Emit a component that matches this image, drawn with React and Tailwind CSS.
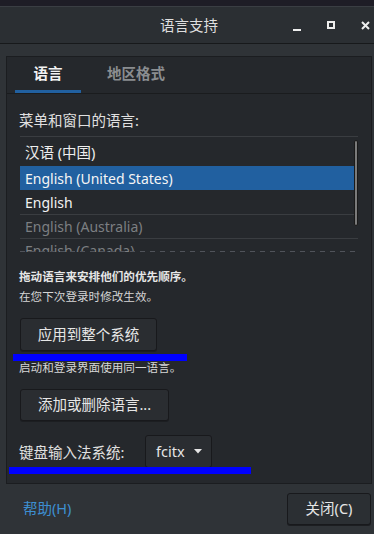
export default function App() {
  const font = "font-['Noto_Sans','Noto_Sans_CJK_SC',sans-serif]";
  return (
    <div className={`relative w-[374px] h-[534px] overflow-hidden bg-[#2f3337] ${font} flex flex-col text-[#e0e0e0]`}>
      <div className="h-[6px] bg-[#1e1d26]" />
      <div className="h-px bg-[#3a3e43]" />
      {/* Title bar */}
      <div className="h-[37px] bg-[#2b2f33] border-b border-[#17191b] grid grid-cols-[1fr_auto_1fr] items-center">
        <div />
        <div className="pl-[4px] text-[14.5px] leading-[20px] text-[#dfdfdf]">语言支持</div>
        <div className="flex justify-end items-center pr-[4px]">
          <svg width="8" height="8" viewBox="0 0 8 8" className="mt-[6px]">
            <rect x="0" y="5" width="8" height="2" fill="#eeeeee" />
          </svg>
          <svg width="8" height="8" viewBox="0 0 8 8" className="ml-[26px]">
            <rect x="1" y="1" width="6" height="6" fill="none" stroke="#eeeeee" strokeWidth="2" />
          </svg>
          <svg width="9" height="9" viewBox="0 0 9 9" className="ml-[26px]">
            <path d="M1 1 L8 8 M8 1 L1 8" stroke="#eeeeee" strokeWidth="2" />
          </svg>
        </div>
      </div>

      {/* Body */}
      <div className="pt-[12px] pl-[6px] pr-[2px]">
        <div className="h-[428px] border border-[#1b1d20] bg-[#25282c] flex flex-col">
          {/* Tabs */}
          <div className="h-[37px] border-b border-[#1a1c1e] flex items-stretch pl-[8px] shrink-0">
            <div className="w-[66px] flex flex-col">
              <div className="flex-1 flex items-center justify-center text-[14.5px] font-bold text-[#f2f2f2]">语言</div>
              <div className="h-[3px] bg-[#2160a0]" />
            </div>
            <div className="ml-[8px] px-[18px] flex items-center pb-[3px] text-[14.5px] font-bold text-[#8a8d90]">地区格式</div>
          </div>

          {/* Content */}
          <div className="px-[13px] flex flex-col">
            <div className="mt-[16px] h-[20px] leading-[20px] text-[14.5px] text-[#e0e0e0] -ml-[1px]">菜单和窗口的语言:</div>

            <div className="relative mt-[6px] h-[117px] border-t border-[#3a3d41] overflow-hidden flex flex-col">
              <div className="h-[29px] shrink-0 flex items-center pt-[2px] px-[5px] text-[14.5px] text-[#eeeeee]">汉语 (中国)</div>
              <div className="h-[24px] shrink-0 flex items-center px-[5px] bg-[#2160a0] text-[14px] text-[#f5f5f5]">English (United States)</div>
              <div className="h-[24px] shrink-0 flex items-center px-[5px] text-[14px] text-[#f2f2f2]">English</div>
              <div className="h-[24px] shrink-0 flex items-center px-[5px] border-t border-[#3a3d41] text-[14px] text-[#7c7f82]">English (Australia)</div>
              <div className="h-[24px] shrink-0 flex items-center px-[5px] border-t border-[#3a3d41] text-[14px] text-[#7c7f82]">English (Canada)</div>
              <div className="absolute left-0 right-0 bottom-0 h-px bg-[#25282c]" />
              <div className="absolute left-0 right-0 bottom-[1px] h-px bg-[repeating-linear-gradient(90deg,#50535a_0_5px,transparent_5px_10px)]" />
              <div className="absolute left-[334px] top-[3px] w-[4px] h-[86px] rounded-[2px] bg-[#7a7a7a] border border-[#1a1a1a]" />
            </div>

            <div className="mt-[14px] h-[20px] leading-[20px] text-[11.6px] font-bold text-[#e6e6e6] -ml-[1px]">拖动语言来安排他们的优先顺序。</div>
            <div className="h-[20px] leading-[20px] text-[11.6px] text-[#d6d6d6] -ml-[1px]">在您下次登录时修改生效。</div>

            <button className="mt-[11px] w-[137px] h-[33px] rounded-[3px] bg-[#2a2d31] border border-[#18191c] shadow-[0_1px_0_#1c1e21] text-[14.5px] text-[#e6e6e6] flex items-center justify-center">应用到整个系统</button>

            <div className="mt-[7px] h-[20px] leading-[20px] text-[11.6px] text-[#d6d6d6] -ml-[1px]">启动和登录界面使用同一语言。</div>

            <button className="mt-[11px] w-[149px] h-[32px] rounded-[3px] bg-[#2a2d31] border border-[#18191c] shadow-[0_1px_0_#1c1e21] text-[14.5px] text-[#e6e6e6] flex items-center justify-center">添加或删除语言...</button>

            <div className="mt-[14px] h-[33px] flex items-center">
              <div className="w-[126px] -ml-[1px] text-[14.5px] text-[#e0e0e0] pt-[3px]">键盘输入法系统:</div>
              <div className="w-[67px] h-[33px] rounded-[3px] bg-[#2a2d31] border border-[#18191c] flex items-center pl-[10px]">
                <span className="text-[14.5px] text-[#e6e6e6]">fcitx</span>
                <svg width="8" height="5" viewBox="0 0 8 5" className="ml-[9px]">
                  <path d="M0 0 L8 0 L4 4.5 Z" fill="#e6e6e6" />
                </svg>
              </div>
            </div>
          </div>
        </div>
      </div>

      {/* Bottom bar */}
      <div className="flex-1 flex items-center justify-between pl-[23px] pr-[3px]">
        <span className="text-[14.5px] text-[#3d8fd1]">帮助(H)</span>
        <button className="w-[84px] h-[32px] rounded-[3px] bg-[#2b2f33] border border-[#18191c] shadow-[0_1px_0_#1c1e21] text-[14.5px] text-[#e6e6e6] flex items-center justify-center">关闭(C)</button>
      </div>

      {/* Annotation marks */}
      <div className="absolute left-[13px] top-[354px] w-[174px] h-[7px] bg-[#0000ff]" />
      <div className="absolute left-[9px] top-[467px] w-[242px] h-[7px] bg-[#0000ff]" />
    </div>
  );
}
